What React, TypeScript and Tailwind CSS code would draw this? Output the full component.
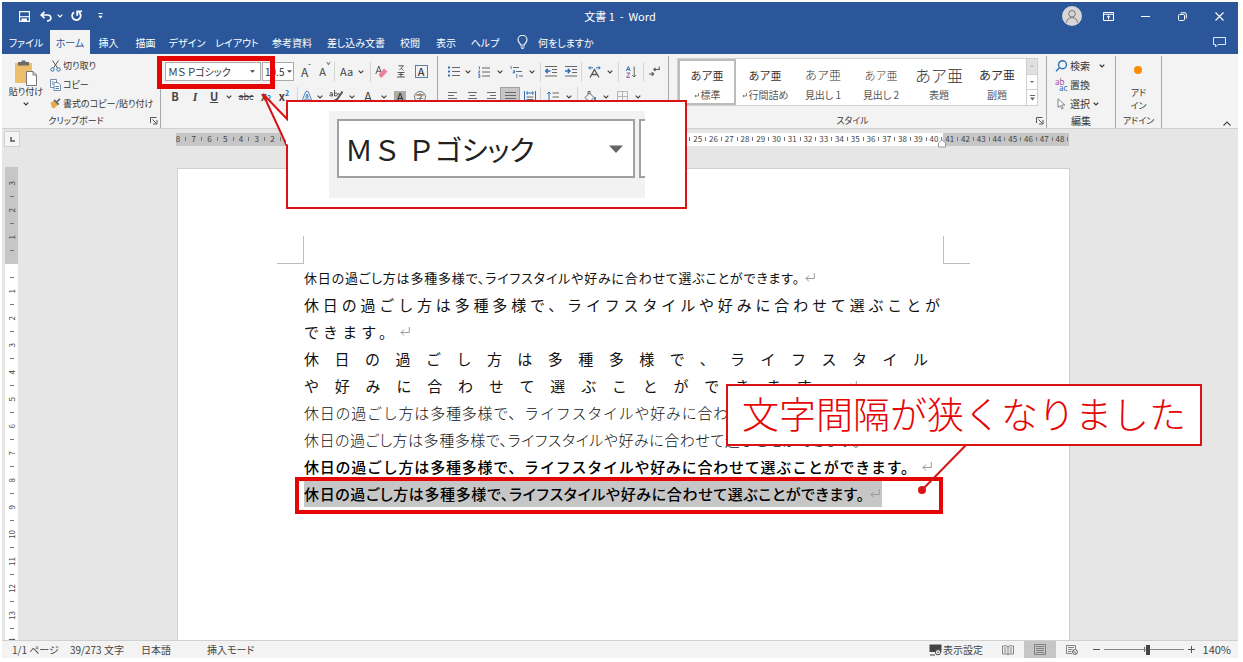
import type { ReactNode } from "react";

const BODY = "休日の過ごし方は多種多様で、ライフスタイルや好みに合わせて選ぶことができます。";

function Chevron({ className = "w-2" }: { className?: string }) {
  return (
    <span className={`flex shrink-0 justify-center ${className}`}>
      <svg width="6" height="4" viewBox="0 0 6 4" fill="none" stroke="currentColor" strokeWidth="1.2">
        <path d="M0.7 0.7 3 3 5.3 0.7" />
      </svg>
    </span>
  );
}

function Triangle({ className = "" }: { className?: string }) {
  return (
    <svg className={className} width="5" height="3" viewBox="0 0 6 3" fill="currentColor">
      <path d="M0 0H6L3 3Z" />
    </svg>
  );
}

function Sep({ className = "" }: { className?: string }) {
  return <span className={`h-5 w-px shrink-0 bg-[#d6d6d6] ${className}`} />;
}

function Tool({ label, className, children }: { label: string; className: string; children: ReactNode }) {
  return (
    <button type="button" aria-label={label} className={`flex h-5 shrink-0 items-center justify-center ${className}`}>
      {children}
    </button>
  );
}

function Launcher({ label }: { label: string }) {
  return (
    <button type="button" aria-label={label} className="flex size-2 items-center justify-center">
      <svg width="8" height="8" viewBox="0 0 8 8" fill="none" stroke="#555" strokeWidth="1">
        <path d="M0.5 6V0.5H6.5M2.5 2.5 6.5 6.5M7 3V7H3" />
      </svg>
    </button>
  );
}

function Lines({ align }: { align: "left" | "center" | "right" | "full" }) {
  const rows = {
    left: "M1 1.5H10M1 4.5H7M1 7.5H10M1 10.5H7",
    center: "M1 1.5H10M2.5 4.5H8.5M1 7.5H10M2.5 10.5H8.5",
    right: "M1 1.5H10M4 4.5H10M1 7.5H10M4 10.5H10",
    full: "M0 1.5H11M0 4.5H11M0 7.5H11M0 10.5H11",
  };
  return (
    <svg width="11" height="12" viewBox="0 0 11 12" fill="none" stroke="#6a6a6a" strokeWidth="1">
      <path d={rows[align]} />
    </svg>
  );
}

function TitleBar() {
  return (
    <div className="grid h-7 grid-cols-[1fr_auto_1fr] items-center">
      <div className="flex items-center pl-3">
        <Tool label="上書き保存" className="w-5">
          <svg width="11" height="11" viewBox="0 0 11 11" fill="none" stroke="#fff" strokeWidth="1.1">
            <path d="M0.6 0.6H10.4V10.4H0.6Z" />
            <path d="M1 5.7H10" />
            <path d="M3 10.5V8H7.5V10.5" fill="#fff" />
          </svg>
        </Tool>
        <Tool label="元に戻す" className="ml-0.5 w-5">
          <svg width="12" height="11" viewBox="0 0 12 11" fill="none" stroke="#fff" strokeWidth="1.7">
            <path d="M4.5 0.8 1.2 4 4.5 7.2M1.5 4H7.5C12 4 12 10 7 10" />
          </svg>
        </Tool>
        <Chevron />
        <Tool label="やり直し" className="ml-0.5 w-5">
          <svg width="13" height="12" viewBox="0 0 13 12" fill="none" stroke="#fff" strokeWidth="1.8">
            <path d="M4 2.2A4.3 4.3 0 1 0 8.8 2.2" />
            <path d="M7.2 5.8V1.4H12" />
          </svg>
        </Tool>
        <Tool label="クイック アクセス ツール バーのユーザー設定" className="ml-0.5 w-6">
          <svg width="5" height="6" viewBox="0 0 5 6" fill="#fff">
            <path d="M0.5 0H4.5V1H0.5ZM0.3 2.8H4.7L2.5 5.4Z" />
          </svg>
        </Tool>
      </div>
      <h1 className="text-[11px] leading-4 whitespace-pre">文書 1  -  Word</h1>
      <div className="flex items-center justify-end">
        <button type="button" aria-label="アカウント" className="mr-2 flex size-5 items-center justify-center rounded-full bg-[#d6d6d6]">
          <svg width="14" height="15" viewBox="0 0 14 15" fill="none" stroke="#777" strokeWidth="1">
            <circle cx="7" cy="4.8" r="3.3" />
            <path d="M1.5 13.5C1.5 7 12.5 7 12.5 13.5" />
          </svg>
        </button>
        <Tool label="リボンの表示オプション" className="w-[37px]">
          <svg width="11" height="9" viewBox="0 0 11 9" fill="none" stroke="#fff" strokeWidth="1">
            <path d="M0.5 0.5H10.5V8.5H0.5ZM0.5 2.3H10.5M5.5 7.5V4M3.8 5.4 5.5 3.8 7.2 5.4" />
          </svg>
        </Tool>
        <Tool label="最小化" className="w-[37px]">
          <svg width="9" height="9" viewBox="0 0 9 9" stroke="#fff"><path d="M0 4.5H9" /></svg>
        </Tool>
        <Tool label="元に戻す (縮小)" className="w-9">
          <svg width="9" height="9" viewBox="0 0 9 9" fill="none" stroke="#fff" strokeWidth="1">
            <rect x="0.5" y="2.5" width="6" height="6" rx="1" />
            <path d="M2.5 0.8H7Q8.3 0.8 8.3 2.2V6.5" />
          </svg>
        </Tool>
        <Tool label="閉じる" className="w-[38px]">
          <svg width="9" height="9" viewBox="0 0 9 9" stroke="#fff" strokeWidth="1.1"><path d="M0.5 0.5 8.5 8.5M8.5 0.5 0.5 8.5" /></svg>
        </Tool>
      </div>
    </div>
  );
}

const TABS: { name: string; width: string }[] = [
  { name: "ファイル", width: "w-[48px]" },
  { name: "ホーム", width: "w-[40px]" },
  { name: "挿入", width: "w-[37px]" },
  { name: "描画", width: "w-[37px]" },
  { name: "デザイン", width: "w-[46px]" },
  { name: "レイアウト", width: "w-[54px]" },
  { name: "参考資料", width: "w-[56px]" },
  { name: "差し込み文書", width: "w-[72px]" },
  { name: "校閲", width: "w-[36px]" },
  { name: "表示", width: "w-[36px]" },
  { name: "ヘルプ", width: "w-[42px]" },
];

function TabRow() {
  return (
    <nav className="flex h-6 items-stretch text-[10px]">
      {TABS.map((tab) => (
        <button
          key={tab.name}
          type="button"
          className={`${tab.width} shrink-0 whitespace-nowrap ${tab.name === "ホーム" ? "bg-[#f3f3f3] text-[#2b579a]" : ""}`}
        >
          {tab.name}
        </button>
      ))}
      <button type="button" className="ml-[11px] flex items-center gap-2.5 whitespace-nowrap">
        <svg width="11" height="14" viewBox="0 0 11 14" fill="none" stroke="#fff" strokeWidth="1.1">
          <path d="M3.5 10C3.5 8 1 7.5 1 4.8A4.4 4.4 0 0 1 10 4.8C10 7.5 7.5 8 7.5 10ZM3.5 12H7.5M4.5 13.5H6.5" />
        </svg>
        何をしますか
      </button>
      <button type="button" aria-label="コメント" className="mr-3 ml-auto">
        <svg width="13" height="11" viewBox="0 0 13 11" fill="none" stroke="#dfe8f5" strokeWidth="1">
          <path d="M0.5 0.5H12.5V7.5H5L2.5 10V7.5H0.5Z" />
        </svg>
      </button>
    </nav>
  );
}

function ClipboardGroup() {
  return (
    <section className="flex w-[159px] shrink-0 flex-col border-r border-[#a8a8a8]">
      <div className="flex text-[9px]">
        <button type="button" className="flex w-[48px] shrink-0 flex-col items-center pt-1">
          <svg width="24" height="26" viewBox="0 0 24 26" fill="none">
            <rect x="1" y="3" width="17" height="20" fill="#edbe6b" />
            <path d="M4 2H7.5V0.5H11.5V2H15V5.5H4Z" fill="#6b6b6b" />
            <path d="M12.5 11.5H19L22.5 15V25.5H12.5Z" fill="#fff" stroke="#777" />
            <path d="M19 11.5V15H22.5" stroke="#777" />
          </svg>
          <span className="leading-3 whitespace-nowrap">貼り付け</span>
          <Chevron className="mt-1 w-3" />
        </button>
        <div className="flex flex-col">
          <button type="button" className="flex h-[19px] items-center gap-0.5 whitespace-nowrap">
            <svg width="11" height="12" viewBox="0 0 10 12" fill="none" strokeWidth="1">
              <path d="M2 0.5 7 8M8 0.5 3 8" stroke="#555" />
              <circle cx="2" cy="9.5" r="1.7" stroke="#2f6fb5" />
              <circle cx="8" cy="9.5" r="1.7" stroke="#2f6fb5" />
            </svg>
            切り取り
          </button>
          <button type="button" className="flex h-[19px] items-center gap-0.5 whitespace-nowrap">
            <svg width="11" height="12" viewBox="0 0 11 12" strokeWidth="0.9">
              <path d="M0.5 0.5H6.5V8.5H0.5Z" fill="#fff" stroke="#6a7f9c" />
              <path d="M4 3.5H8L10.5 6V11.5H4Z" fill="#fff" stroke="#6a7f9c" />
              <path d="M5.5 7.5H9M5.5 9.5H9M1.8 2.8H3.5M1.8 5H3.5" stroke="#2f6fb5" />
            </svg>
            コピー
          </button>
          <button type="button" className="flex h-[19px] items-center gap-0.5 whitespace-nowrap">
            <svg width="11" height="11" viewBox="0 0 11 11">
              <path d="M0.5 5 4 2.5 8 7 4 10.5 2 9.5Z" fill="#e8a94b" />
              <path d="M3.5 2.5 8.2 7.2 9.3 6 7.6 4.2 10.6 1.4 9.4 0.3 6.4 3 4.6 1.2Z" fill="#666" />
            </svg>
            書式のコピー/貼り付け
          </button>
        </div>
      </div>
      <div className="mt-auto flex items-center text-[9px] leading-[14px]">
        <span className="flex-1 text-center">クリップボード</span>
        <span className="pr-0.5">
          <Launcher label="クリップボードのオプション" />
        </span>
      </div>
    </section>
  );
}

function FontCallout() {
  return (
    <aside className="absolute top-[44px] left-[125px] z-20 h-[109px] w-[401px] border-2 border-[#d81414] bg-white">
      <svg className="absolute -top-2.5 -left-[27px]" width="30" height="58" viewBox="0 0 30 58">
        <path d="M27.5 28 2 3 27.5 55Z" fill="#fff" />
        <path d="M26 10V27L2 2 26 54V58" fill="none" stroke="#d81414" strokeWidth="2" />
        <path d="M26.5 29.5V52" stroke="#fff" strokeWidth="3" />
      </svg>
      <div className="mt-[9px] ml-[41px] flex h-[87px] w-[316px] items-start gap-1 overflow-hidden bg-[#f2f2f2] pt-2 pl-2">
        <div className="flex h-[59px] w-[298px] shrink-0 items-center justify-between border-2 border-[#a0a0a0] bg-white pr-2.5 pl-1.5">
          <span className="text-[28px] leading-none whitespace-nowrap text-[#222]">
            <span className="[font-feature-settings:normal]">ＭＳ Ｐ</span>ゴシック
          </span>
          <svg width="14" height="8" viewBox="0 0 14 8" fill="#666"><path d="M0 0.5H14L7 8Z" /></svg>
        </div>
        <div className="h-[59px] w-5 shrink-0 border-2 border-[#a0a0a0] bg-white" />
      </div>
    </aside>
  );
}

function FontGroup() {
  return (
    <section className="relative w-[277px] shrink-0 border-r border-[#a8a8a8] pt-[3px] text-[#444]">
      <div className="flex h-[25px] items-center pl-1">
        <div className="relative flex items-center">
          <select aria-label="フォント" className="h-[19px] w-24 appearance-none border border-[#ababab] bg-white pl-0.5 text-[10px] text-[#333]">
            <option>ＭＳ Ｐゴシック</option>
          </select>
          <Triangle className="pointer-events-none absolute right-1.5" />
        </div>
        <div className="relative ml-px flex items-center">
          <select aria-label="フォント サイズ" className="h-[19px] w-8 appearance-none border border-[#ababab] bg-white pl-0.5 text-[10px] text-[#333]">
            <option>10.5</option>
          </select>
          <Triangle className="pointer-events-none absolute right-0.5 bg-white" />
        </div>
        <Tool label="フォント サイズの拡大" className="ml-0.5 w-5 text-[12px]">
          A<span className="self-start text-[8px] leading-2">ˆ</span>
        </Tool>
        <Tool label="フォント サイズの縮小" className="w-[18px] text-[11px]">
          A<span className="self-start text-[8px] leading-2">ˇ</span>
        </Tool>
        <Sep />
        <Tool label="文字種の変換" className="w-[35px] gap-1 text-[11px]">
          Aa<Chevron />
        </Tool>
        <Sep />
        <Tool label="すべての書式をクリア" className="w-5">
          <svg width="13" height="13" viewBox="0 0 13 13">
            <path d="M0.8 9 3.8 1 6.8 9M2 6.3H5.6" fill="none" stroke="#555" />
            <path d="M3.5 9.5 9 3.5 12.5 6.5 7 12.5H5.5Z" fill="#ea8295" />
          </svg>
        </Tool>
        <Tool label="ルビ" className="w-5">
          <svg width="8" height="13" viewBox="0 0 8 13" fill="none" stroke="#555" strokeWidth="1">
            <path d="M1.5 0.8H6.5L2.5 5M4.5 3.5 6.5 5.5M0.5 7.5H7.5M1.5 9.5H6.5M0 12H8M4 7V12" />
          </svg>
        </Tool>
        <Tool label="囲み線" className="w-5">
          <span className="flex size-[13px] items-center justify-center border border-[#5b7ea8] text-[11px] leading-none text-[#222]">A</span>
        </Tool>
      </div>
      <div className="flex h-[25px] items-center pl-1">
        <Tool label="太字" className="w-5 text-[11px] font-bold">B</Tool>
        <Tool label="斜体" className="w-5 font-['Liberation_Serif',serif] text-[12px] font-bold italic">I</Tool>
        <Tool label="下線" className="w-[18px] text-[11px] font-bold underline">U</Tool>
        <Chevron className="w-3" />
        <Tool label="取り消し線" className="w-[22px] text-[9px] line-through">abc</Tool>
        <Tool label="下付き" className="w-[18px] text-[11px] font-bold">x<sub className="text-[7px] text-[#2f6fb5]">2</sub></Tool>
        <Tool label="上付き" className="w-[18px] text-[11px] font-bold">x<sup className="text-[7px] text-[#2f6fb5]">2</sup></Tool>
        <Sep className="ml-1" />
        <Tool label="文字の効果と体裁" className="w-[18px]">
          <svg width="12" height="11" viewBox="0 0 12 11" fill="none" stroke="#4a86c5" strokeWidth="1">
            <path d="M0.8 10.5 4.8 0.6H7.2L11.2 10.5H8.9L8 8H4L3 10.5ZM6 3 4.8 6.2H7.2Z" />
          </svg>
        </Tool>
        <Chevron />
        <Tool label="蛍光ペンの色" className="w-6">
          <svg width="15" height="13" viewBox="0 0 15 13" fill="none" stroke="#555" strokeWidth="1">
            <path d="M0.8 3Q3.5 1.5 3.5 3.5V6Q0.5 6.5 0.7 5 1 4 3.5 4.2M5.5 0V6Q8.5 6.5 8.5 4 8.5 2.5 5.5 3.2M9.5 3 10.5 5.5" />
            <path d="M13.5 1.5 8 9.5 5 11" strokeWidth="2" />
          </svg>
        </Tool>
        <Chevron />
        <Tool label="フォントの色" className="w-6 text-[13px]">A</Tool>
        <Chevron />
        <Tool label="文字の網かけ" className="w-6">
          <span className="flex size-3 items-center justify-center bg-[#ababab] text-[11px] leading-none text-[#222]">A</span>
        </Tool>
        <Tool label="囲い文字" className="w-4">
          <span className="flex size-3 items-center justify-center rounded-full border border-[#777] text-[8px] leading-none">字</span>
        </Tool>
      </div>
      <span className="absolute top-0 -left-1 z-10 h-[33px] w-[118px] border-[5px] border-[#e60505]" />
      <FontCallout />
    </section>
  );
}

function ParagraphGroup() {
  return (
    <section className="w-[231px] shrink-0 border-r border-[#a8a8a8] pt-[3px] text-[#444]">
      <div className="flex h-[25px] items-center pl-1.5">
        <Tool label="箇条書き" className="w-5">
          <svg width="12" height="11" viewBox="0 0 12 11">
            <path d="M4 1.5H12M4 5.5H12M4 9.5H12" stroke="#666" />
            <path d="M0 0.5H2V2.5H0ZM0 4.5H2V6.5H0ZM0 8.5H2V10.5H0Z" fill="#2f6fb5" />
          </svg>
        </Tool>
        <Chevron />
        <Tool label="段落番号" className="w-6">
          <svg width="12" height="12" viewBox="0 0 12 12" fill="none">
            <path d="M4 2H12M4 6H12M4 10H12" stroke="#666" />
            <path d="M0.5 0.8H1.5V3.5M0.2 5H1.8L0.5 7H2M0.2 8.5H1.8V11.5H0.2M0.2 10H1.8" stroke="#2f6fb5" strokeWidth="0.8" />
          </svg>
        </Tool>
        <Chevron />
        <Tool label="アウトライン" className="w-6">
          <svg width="13" height="12" viewBox="0 0 13 12" fill="none">
            <path d="M3 1.5H9M6 5.5H12M9 10H13" stroke="#666" />
            <path d="M0.5 0.3H1.2V3M3.2 4.5H4.6V7H3.2V5.8H4.6M6.8 8V12" stroke="#2f6fb5" strokeWidth="0.8" />
          </svg>
        </Tool>
        <Chevron />
        <Sep className="ml-1" />
        <Tool label="インデントを減らす" className="w-5">
          <svg width="12" height="11" viewBox="0 0 12 11" fill="none">
            <path d="M0 0.5H12M7 3.5H12M7 6.5H12M0 10H12" stroke="#666" />
            <path d="M5.5 5H0.8M2.8 2.8 0.6 5 2.8 7.2" stroke="#2f6fb5" strokeWidth="1.4" />
          </svg>
        </Tool>
        <Tool label="インデントを増やす" className="w-5">
          <svg width="12" height="11" viewBox="0 0 12 11" fill="none">
            <path d="M0 0.5H12M7 3.5H12M7 6.5H12M0 10H12" stroke="#666" />
            <path d="M0 5H4.8M2.8 2.8 5 5 2.8 7.2" stroke="#2f6fb5" strokeWidth="1.4" />
          </svg>
        </Tool>
        <Sep />
        <Tool label="拡張書式" className="w-6">
          <svg width="13" height="12" viewBox="0 0 13 12" fill="none">
            <path d="M2 11.5 6.5 3.5 11 11.5M3.8 8.5H9.2" stroke="#555" strokeWidth="1.3" />
            <path d="M5 1.8H0.8M2.5 0.2 0.8 1.8 2.5 3.4M8 1.8H12.2M10.5 0.2 12.2 1.8 10.5 3.4" stroke="#2f6fb5" />
          </svg>
        </Tool>
        <Chevron />
        <Sep className="ml-1" />
        <Tool label="並べ替え" className="w-6">
          <svg width="11" height="12" viewBox="0 0 11 12" fill="none">
            <path d="M0.4 5 2.3 0.5 4.2 5M1 3.5H3.6" stroke="#2f6fb5" />
            <path d="M0.5 7H4L0.5 11.3H4.2" stroke="#9b4fa5" />
            <path d="M8.2 0.5V11M6.2 9 8.2 11 10.2 9" stroke="#666" />
          </svg>
        </Tool>
        <Sep />
        <Tool label="編集記号の表示" className="w-5">
          <svg width="11" height="11" viewBox="0 0 11 11" fill="none" stroke="#555" strokeWidth="1.1">
            <path d="M10.2 0.5V3.5H5M6.5 1.8 4.8 3.5 6.5 5.2M0 8H4.5M2.8 6.2 4.6 8 2.8 9.8" />
          </svg>
        </Tool>
      </div>
      <div className="flex h-[25px] items-center pl-1">
        <Tool label="左揃え" className="w-5"><Lines align="left" /></Tool>
        <Tool label="中央揃え" className="w-5"><Lines align="center" /></Tool>
        <Tool label="右揃え" className="w-[18px]"><Lines align="right" /></Tool>
        <Tool label="両端揃え" className="w-5 border border-[#a0a0a0] bg-[#c6c6c6]"><Lines align="full" /></Tool>
        <Tool label="均等割り付け" className="w-5">
          <svg width="12" height="12" viewBox="0 0 12 12" fill="none">
            <path d="M0.5 0V12M11.5 0V12M2.5 2H9.5M4 0.5 2.3 2 4 3.5M8 0.5 9.7 2 8 3.5" stroke="#2f6fb5" />
            <path d="M2.5 6H9.5M2.5 8.5H9.5M2.5 11H9.5" stroke="#666" />
          </svg>
        </Tool>
        <Sep />
        <Tool label="行と段落の間隔" className="w-6">
          <svg width="12" height="12" viewBox="0 0 12 12" fill="none">
            <path d="M5.5 2H12M5.5 6H12M5.5 10H12" stroke="#666" />
            <path d="M2 1V11M0.3 2.8 2 1 3.7 2.8M0.3 9.2 2 11 3.7 9.2" stroke="#2f6fb5" />
          </svg>
        </Tool>
        <Chevron />
        <Sep className="ml-1" />
        <Tool label="塗りつぶし" className="w-6">
          <svg width="13" height="12" viewBox="0 0 13 12" fill="none">
            <path d="M1 6.5 5.5 2 10 6.5 5.5 11ZM4 3.5V0.5H6V3" stroke="#666" />
            <path d="M11 6V9.5" stroke="#2f6fb5" strokeWidth="1.6" />
          </svg>
        </Tool>
        <Chevron />
        <Tool label="罫線" className="w-6">
          <svg width="11" height="11" viewBox="0 0 11 11" fill="none" stroke="#b5b5b5">
            <path d="M0.5 0.5H10.5V10.5H0.5ZM5.5 0.5V10.5M0.5 5.5H10.5" />
          </svg>
        </Tool>
        <Chevron />
      </div>
    </section>
  );
}

const STYLES: { sample: string; name: string; mark: boolean }[] = [
  { sample: "text-[11px]", name: "標準", mark: true },
  { sample: "text-[11px]", name: "行間詰め", mark: true },
  { sample: "text-[12px] font-light", name: "見出し 1", mark: false },
  { sample: "text-[11px] font-light", name: "見出し 2", mark: false },
  { sample: "text-[16px] font-light", name: "表題", mark: false },
  { sample: "text-[12px]", name: "副題", mark: false },
];

function StylesGroup() {
  return (
    <section className="flex w-[378px] shrink-0 flex-col border-r border-[#a8a8a8] pt-0.5 pl-2">
      <div className="flex h-[48px] w-[361px] border border-[#d0d0d0] bg-white">
        {STYLES.map((s, i) => (
          <button
            key={s.name}
            type="button"
            className={`flex w-[58px] shrink-0 flex-col items-center justify-between border-2 pt-1 whitespace-nowrap text-[#333] ${
              i === 0 ? "border-[#bcbcbc]" : "border-transparent"
            }`}
          >
            <span className={`${s.sample} flex h-5 items-center leading-none [font-feature-settings:normal]`}>あア亜</span>
            <span className="flex items-center gap-0.5 text-[10px] leading-4 text-[#555]">
              {s.mark && (
                <svg width="5" height="5" viewBox="0 0 5 5" fill="none" stroke="#666" strokeWidth="0.8">
                  <path d="M4.5 0V3H1M2 2 0.8 3 2 4.2" />
                </svg>
              )}
              {s.name}
            </span>
          </button>
        ))}
        <div className="flex flex-1 flex-col divide-y divide-[#d0d0d0] border-l border-[#d0d0d0] text-[#666]">
          <button type="button" aria-label="前の行" className="flex flex-1 items-center justify-center bg-[#e1e1e1] text-[#b5b5b5]">
            <svg width="4" height="2" viewBox="0 0 6 3" fill="currentColor"><path d="M0 3H6L3 0Z" /></svg>
          </button>
          <button type="button" aria-label="次の行" className="flex flex-1 items-center justify-center">
            <svg width="4" height="2" viewBox="0 0 6 3" fill="currentColor"><path d="M0 0H6L3 3Z" /></svg>
          </button>
          <button type="button" aria-label="その他" className="flex flex-1 items-center justify-center">
            <svg width="5" height="6" viewBox="0 0 5 6" fill="currentColor"><path d="M0 0H5V1H0ZM0 2.5H5L2.5 5.5Z" /></svg>
          </button>
        </div>
      </div>
      <div className="mt-auto flex items-center text-[9px] leading-[14px]">
        <span className="flex-1 pr-2 text-center">スタイル</span>
        <span className="pr-0.5">
          <Launcher label="スタイルのオプション" />
        </span>
      </div>
    </section>
  );
}

function EditGroup() {
  return (
    <section className="flex w-[69px] shrink-0 flex-col border-r border-[#a8a8a8] text-[10px]">
      <button type="button" className="flex h-[19px] items-center pl-2 whitespace-nowrap">
        <svg className="mr-0.5" width="13" height="12" viewBox="0 0 13 12" fill="none" stroke="#2f6fb5" strokeWidth="1.4">
          <circle cx="7.5" cy="4.8" r="4" />
          <path d="M4.5 7.8 1 11.3" />
        </svg>
        検索
        <Chevron className="ml-2 w-2" />
      </button>
      <button type="button" className="flex h-[19px] items-center pl-2 whitespace-nowrap">
        <span className="mr-0.5 flex w-[13px] flex-col text-left text-[8px] leading-[6px]">
          <span className="text-[#9b4fa5]">ab</span>
          <span className="pl-1 text-[#2f6fb5]">ac</span>
        </span>
        置換
      </button>
      <button type="button" className="flex h-[19px] items-center pl-2.5 whitespace-nowrap">
        <svg className="mr-1" width="9" height="12" viewBox="0 0 9 12" fill="#fff" stroke="#777" strokeWidth="0.9">
          <path d="M1 0.8V9.5L3.2 7.5 4.8 11 6.2 10.3 4.7 7H7.8Z" />
        </svg>
        選択
        <Chevron className="ml-0.5 w-2" />
      </button>
      <div className="mt-auto text-center leading-[14px]">編集</div>
    </section>
  );
}

function AddinGroup() {
  return (
    <section className="flex w-[46px] shrink-0 flex-col items-center border-r border-[#a8a8a8] text-[9px]">
      <button type="button" className="flex flex-col items-center pt-2.5 leading-[13px]">
        <span className="mb-3 size-2 rounded-full bg-[#ff8c00]" />
        <span>アド</span>
        <span>イン</span>
      </button>
      <div className="mt-auto leading-[14px]">アドイン</div>
    </section>
  );
}

const H_TICKS = Array.from({ length: 114 }, (_, i) => i);

function HorizontalRuler() {
  return (
    <div className="flex h-5 items-center bg-[#e6e6e6]">
      <span className="ml-0.5 flex size-4 shrink-0 items-center justify-center border border-[#d0d0d0] bg-[#f5f5f5]">
        <svg width="5" height="5" viewBox="0 0 5 5" fill="none" stroke="#555" strokeWidth="1.5"><path d="M1 0V4H5" /></svg>
      </span>
      <div className="flex flex-1 justify-center pr-[13px]">
        <div className="grid w-[893px] shrink-0 grid-cols-1">
          <div className="col-start-1 row-start-1 flex h-[13px]">
            <span className="flex-1 bg-[#c6c6c6]" />
            <span className="w-[640px] bg-white" />
            <span className="flex-1 bg-[#c6c6c6]" />
          </div>
          <div className="relative col-start-1 row-start-1 flex items-center justify-between pr-px pl-0.5 text-[8px] leading-none text-[#444]">
            {H_TICKS.map((i) => {
              const n = Math.abs(i / 2 - 8);
              return (
                <span key={i} className="flex w-0 justify-center">
                  {i % 2 ? <span className="h-1 w-px shrink-0 bg-[#777]" /> : n === 0 ? null : <span>{n}</span>}
                </span>
              );
            })}
            <svg className="absolute top-1.5 right-[123px]" width="8" height="9" viewBox="0 0 8 9" fill="#fff" stroke="#999">
              <path d="M4 0.7 7.5 4V8H0.5V4Z" />
            </svg>
          </div>
        </div>
      </div>
    </div>
  );
}

function VNumber({ n }: { n: number }) {
  return (
    <span className="flex flex-1 items-center justify-center">
      <span className="rotate-180 text-[8px] leading-none [writing-mode:vertical-rl]">{n}</span>
    </span>
  );
}

function VTick() {
  return (
    <span className="flex flex-1 items-center justify-center">
      <span className="h-px w-1 bg-[#777]" />
    </span>
  );
}

function VerticalRuler() {
  return (
    <div className="mt-[18px] ml-[3px] flex w-[13px] shrink-0 flex-col overflow-hidden bg-white text-[#444]">
      <div className="flex h-[97px] shrink-0 flex-col bg-[#c6c6c6] pt-[9px]">
        {[3, 2, 1].map((n) => (
          <div key={n} className="flex h-[27px] shrink-0 flex-col">
            <VNumber n={n} />
            <VTick />
          </div>
        ))}
      </div>
      <div className="flex flex-col pt-[7px]">
        {Array.from({ length: 14 }, (_, i) => (
          <div key={i} className="flex h-[27px] shrink-0 flex-col">
            <VTick />
            <VNumber n={i + 1} />
          </div>
        ))}
      </div>
    </div>
  );
}

function Line({ text, width, style = "", mark = true }: { text: string; width: string; style?: string; mark?: boolean }) {
  return (
    <div className="flex items-center">
      <p className={`${width} ${style} shrink-0 whitespace-nowrap [text-align-last:justify]`}>{text}</p>
      {mark && (
        <svg className="ml-1.5 shrink-0" width="10" height="9" viewBox="0 0 10 9" fill="none" stroke="#999" strokeWidth="1">
          <path d="M9.3 0V5.5H1M4 2.5 1 5.5 4 8.5" />
        </svg>
      )}
    </div>
  );
}

function Page() {
  return (
    <article className="relative mt-[19px] w-[893px] shrink-0 border border-b-0 border-[#cfcfcf] bg-white px-[126px] pt-[67px] text-[#111]">
      <div className="-mx-[27px] flex h-7 justify-between">
        <span className="w-[27px] border-r border-b border-[#bdbdbd]" />
        <span className="w-[27px] border-b border-l border-[#bdbdbd]" />
      </div>
      <div className="text-[15px] leading-[27px]">
        <Line text={BODY} width="w-[495px]" style="text-[13px]" />
        <Line text={BODY.slice(0, 34)} width="w-[636px]" mark={false} style="[font-feature-settings:normal]" />
        <Line text={BODY.slice(34)} width="w-[90px]" style="[font-feature-settings:normal]" />
        <Line text={BODY.slice(0, 21)} width="w-[624px]" mark={false} style="[font-feature-settings:normal]" />
        <Line text={BODY.slice(21)} width="w-[537px]" style="[font-feature-settings:normal]" />
        <Line text={BODY} width="w-[612px]" style="font-light [font-feature-settings:normal]" />
        <Line text={BODY} width="w-[556px]" style="font-light" mark={false} />
        <Line text={BODY} width="w-[612px]" style="font-medium text-black [font-feature-settings:normal]" />
        <div className="flex">
          <div className="bg-[#c6c6c6] pr-0.5">
            <Line text={BODY} width="w-[560px]" style="font-medium text-black" />
          </div>
        </div>
      </div>
      <span className="absolute top-[308px] left-[117px] h-[37px] w-[648px] border-4 border-[#e60505]" />
      <svg className="absolute top-[274px] left-[738px] z-10" width="56" height="54" viewBox="0 0 56 54">
        <path d="M51 1 6 47" stroke="#d81414" strokeWidth="2" />
        <circle cx="6" cy="47" r="4" fill="#d81414" />
      </svg>
      <aside className="absolute top-[215px] left-[548px] z-10 flex h-[62px] w-[476px] items-center justify-center border-2 border-[#d81414] bg-white pb-1 text-[37px] leading-none font-light whitespace-nowrap text-[#e60505] [font-feature-settings:normal]">
        文字間隔が狭くなりました
      </aside>
    </article>
  );
}

function StatusBar() {
  return (
    <footer className="flex h-[17px] shrink-0 items-center bg-[#f3f3f3] pl-2.5 text-[10px] whitespace-nowrap text-[#444]">
      <button type="button" className="w-[58px] shrink-0 text-left">1/1 ページ</button>
      <button type="button" className="w-[71px] shrink-0 text-left">39/273 文字</button>
      <button type="button" className="w-[66px] shrink-0 text-left">日本語</button>
      <button type="button" className="shrink-0">挿入モード</button>
      <button type="button" className="ml-auto flex items-center gap-px">
        <svg width="13" height="12" viewBox="0 0 13 12">
          <path d="M0.5 0.5H12.5V8H0.5ZM1 10.5H6V11.5H1Z" fill="#444" />
          <circle cx="9" cy="8.2" r="2.6" fill="#f3f3f3" stroke="#444" />
          <circle cx="9" cy="8.2" r="0.8" fill="#444" />
        </svg>
        表示設定
      </button>
      <Tool label="閲覧モード" className="ml-[9px] w-8">
        <svg width="12" height="10" viewBox="0 0 12 10" fill="none" stroke="#777" strokeWidth="0.9">
          <path d="M6 1.5Q3.5 0 0.5 1V9H5L6 9.6 7 9H11.5V1Q8.5 0 6 1.5V9.5M2 3H4.3M2 5H4.3M2 7H4.3M7.7 3H10M7.7 5H10M7.7 7H10" />
        </svg>
      </Tool>
      <button type="button" aria-label="印刷レイアウト" className="flex h-[17px] w-8 items-center justify-center bg-[#c6c6c6]">
        <svg width="12" height="11" viewBox="0 0 12 11" fill="none" stroke="#777" strokeWidth="0.9">
          <path d="M0.5 0.5H11.5V10.5H0.5ZM2 2.5H10M2 4.5H10M2 6.5H10M2 8.5H10" />
        </svg>
      </button>
      <Tool label="Web レイアウト" className="w-8">
        <svg width="12" height="10" viewBox="0 0 12 10" fill="none" stroke="#777" strokeWidth="0.9">
          <path d="M6 8.5H0.5V0.5H9.5V4M2 2.5H8M2 4.5H6.5M2 6.5H5.5" />
          <circle cx="9" cy="7" r="2.4" stroke="#555" />
          <path d="M7.5 6 10 8.5" stroke="#555" />
        </svg>
      </Tool>
      <button type="button" aria-label="縮小" className="flex w-4 items-center justify-center">
        <svg width="7" height="7" viewBox="0 0 7 7" stroke="#555"><path d="M0 3.5H7" /></svg>
      </button>
      <input
        type="range"
        aria-label="ズーム"
        min={0}
        max={100}
        defaultValue={55}
        className="h-3 w-20 appearance-none bg-[linear-gradient(#888,#888),linear-gradient(#666,#666)] bg-[length:100%_1px,1px_5px] bg-center bg-no-repeat [&::-webkit-slider-thumb]:h-2.5 [&::-webkit-slider-thumb]:w-1 [&::-webkit-slider-thumb]:appearance-none [&::-webkit-slider-thumb]:bg-[#444]"
      />
      <button type="button" aria-label="拡大" className="flex w-3.5 items-center justify-center">
        <svg width="7" height="7" viewBox="0 0 7 7" stroke="#555"><path d="M0 3.5H7M3.5 0V7" /></svg>
      </button>
      <button type="button" className="w-10 pr-[7px] text-right text-[11px]">140%</button>
    </footer>
  );
}

export default function App() {
  return (
    <div className="h-screen bg-white pt-0.5 pr-[5px] pb-1 pl-0.5 font-['Noto_Sans_CJK_JP',sans-serif] text-[#333] [font-feature-settings:'palt']">
      <div className="flex h-full flex-col overflow-hidden">
        <header className="shrink-0 bg-[#2b579a] text-white">
          <TitleBar />
          <TabRow />
        </header>
        <div className="relative z-20 flex h-[75px] shrink-0 border-b border-[#d0d0d0] bg-[#f3f3f3] pt-0.5">
          <ClipboardGroup />
          <FontGroup />
          <ParagraphGroup />
          <StylesGroup />
          <EditGroup />
          <AddinGroup />
          <button type="button" aria-label="リボンを折りたたむ" className="mr-[7px] mb-0.5 ml-auto self-end">
            <svg width="8" height="5" viewBox="0 0 8 5" fill="none" stroke="#444" strokeWidth="1.1"><path d="M0.5 4.5 4 1 7.5 4.5" /></svg>
          </button>
        </div>
        <HorizontalRuler />
        <main className="flex min-h-0 flex-1 overflow-hidden border-b border-[#d0d0d0] bg-[#e6e6e6]">
          <VerticalRuler />
          <div className="flex flex-1 justify-center overflow-hidden pr-[9px]">
            <Page />
          </div>
        </main>
        <StatusBar />
      </div>
    </div>
  );
}
